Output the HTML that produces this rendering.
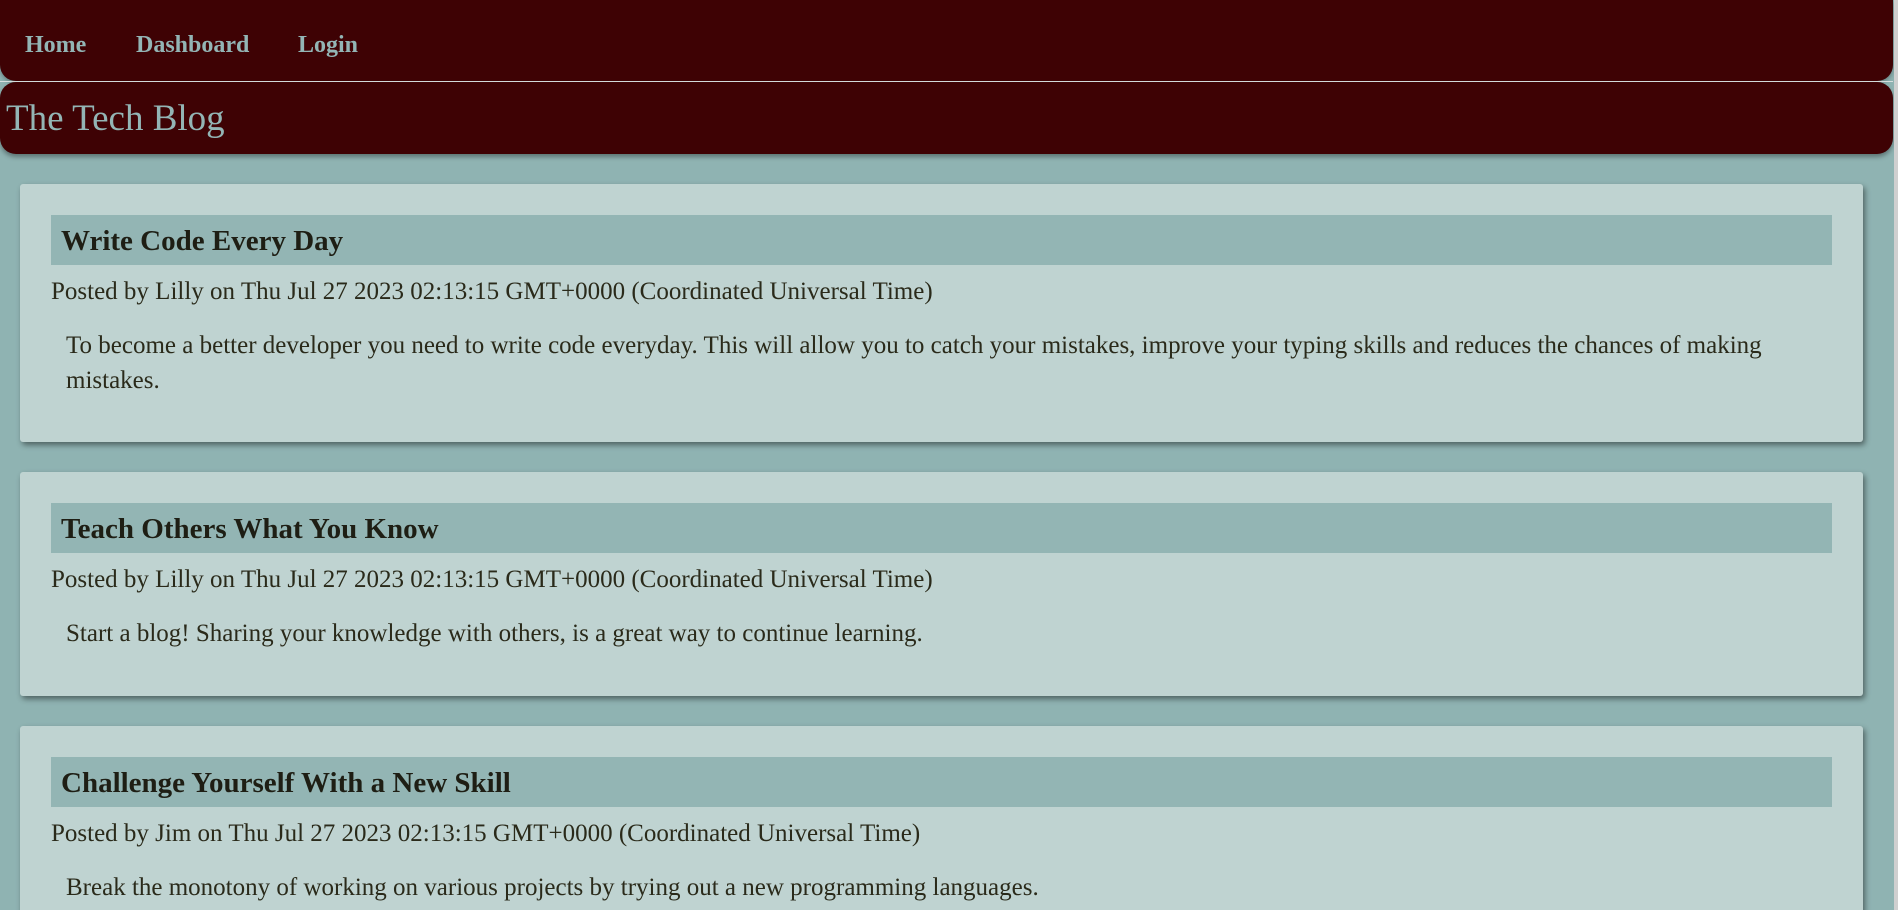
<!DOCTYPE html>
<html><head><meta charset="utf-8"><style>
html,body{margin:0;padding:0;width:1898px;height:910px;overflow:hidden;background:#8fb3b2;font-family:Georgia,"Liberation Serif",serif;position:relative;}
.nav{position:absolute;left:0;top:0;width:1893px;height:81px;background:#3e0204;border-radius:0 0 16px 16px;box-shadow:0 2px 4px rgba(0,0,0,.3);}
.nav a{position:absolute;top:32px;font-weight:bold;font-size:24px;color:#93b5b5;text-decoration:none;}
.line{position:absolute;left:0;top:81px;width:1893px;height:1px;background:#d8e0e0;}
.hdr{position:absolute;left:0;top:82px;width:1893px;height:72px;background:#3e0204;border-radius:16px;box-shadow:0 3px 5px rgba(0,0,0,.35);}
.hdr span{position:absolute;left:6px;top:15px;font-size:37px;color:#93b5b5;}
.card{position:absolute;left:20px;width:1843px;background:#bfd3d1;border-radius:3px;box-shadow:2px 3px 6px rgba(0,0,0,.45);}
.t{position:absolute;left:31px;top:31px;width:1781px;height:50px;background:#93b5b4;}
.t b{position:absolute;left:10px;top:10px;font-size:29px;color:#1e1e14;}
.p{position:absolute;left:31px;font-size:25px;color:#2a2a1a;white-space:nowrap;}
.b{position:absolute;left:46px;font-size:25px;color:#2a2a1a;line-height:35px;width:1740px;}
.sb{position:absolute;right:0;top:0;width:4px;height:910px;background:#cfcfcf;}
</style></head><body>
<div class="nav"><a style="left:25px">Home</a><a style="left:136px">Dashboard</a><a style="left:298px">Login</a></div>
<div class="line"></div>
<div class="hdr"><span>The Tech Blog</span></div>
<div class="card" style="top:184px;height:258px">
<div class="t"><b>Write Code Every Day</b></div>
<div class="p" style="top:94px">Posted by Lilly on Thu Jul 27 2023 02:13:15 GMT+0000 (Coordinated Universal Time)</div>
<div class="b" style="top:144px">To become a better developer you need to write code everyday. This will allow you to catch your mistakes, improve your typing skills and reduces the chances of making mistakes.</div>
</div>
<div class="card" style="top:472px;height:224px">
<div class="t"><b>Teach Others What You Know</b></div>
<div class="p" style="top:94px">Posted by Lilly on Thu Jul 27 2023 02:13:15 GMT+0000 (Coordinated Universal Time)</div>
<div class="b" style="top:144px">Start a blog! Sharing your knowledge with others, is a great way to continue learning.</div>
</div>
<div class="card" style="top:726px;height:190px">
<div class="t"><b>Challenge Yourself With a New Skill</b></div>
<div class="p" style="top:94px">Posted by Jim on Thu Jul 27 2023 02:13:15 GMT+0000 (Coordinated Universal Time)</div>
<div class="b" style="top:144px">Break the monotony of working on various projects by trying out a new programming languages.</div>
</div>
<div class="sb"></div>
</body></html>
